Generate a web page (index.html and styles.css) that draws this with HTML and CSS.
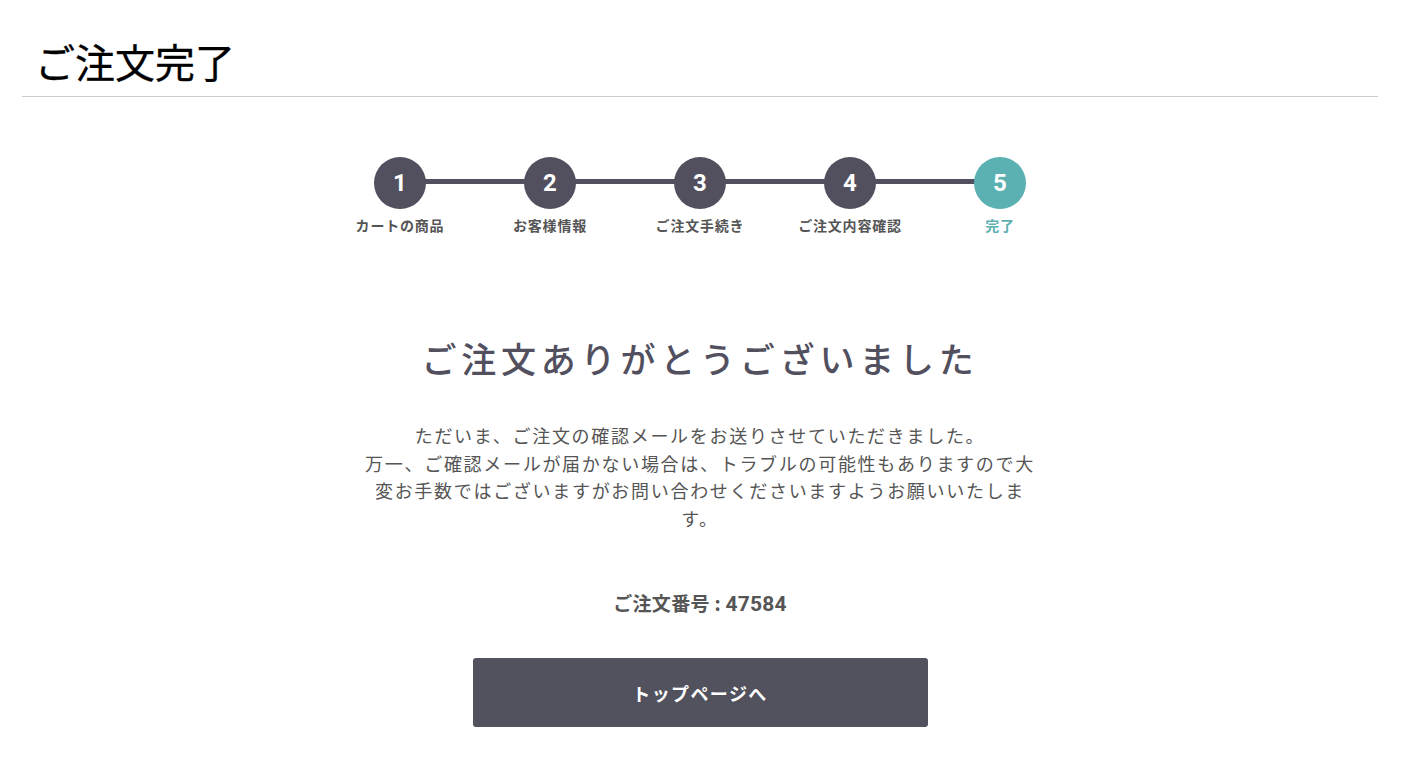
FILE: index.html
```html
<!DOCTYPE html>
<html lang="ja">
<head>
<meta charset="utf-8">
<title>ご注文完了</title>
<link rel="stylesheet" href="styles.css">
</head>
<body>
<div class="page">
  <header class="page-header">
    <h1 class="page-title">ご注文完了</h1>
  </header>

  <ol class="steps">
    <li class="step"><span class="step-num">1</span><span class="step-label">カートの商品</span></li>
    <li class="step"><span class="step-num">2</span><span class="step-label">お客様情報</span></li>
    <li class="step"><span class="step-num">3</span><span class="step-label">ご注文手続き</span></li>
    <li class="step"><span class="step-num">4</span><span class="step-label">ご注文内容確認</span></li>
    <li class="step is-current"><span class="step-num">5</span><span class="step-label">完了</span></li>
  </ol>

  <section class="complete">
    <h2 class="complete-title">ご注文ありがとうございました</h2>
    <p class="complete-text">ただいま、ご注文の確認メールをお送りさせていただきました。<br>万一、ご確認メールが届かない場合は、トラブルの可能性もありますので大変お手数ではございますがお問い合わせくださいますようお願いいたします。</p>
    <p class="order-no">ご注文番号 : <span class="num">47584</span></p>
    <a class="btn-top" href="#">トップページへ</a>
  </section>
</div>
</body>
</html>
```

FILE: styles.css
```css
* { box-sizing: border-box; }

html, body {
  margin: 0;
  padding: 0;
  background: #fff;
}

body {
  font-family: "Noto Sans CJK JP", "Noto Sans", sans-serif;
  color: #555;
}

.page {
  width: 1356px;
  margin: 0 0 0 22px;
}

.page-header {
  padding: 32px 13px 6px;
  border-bottom: 1px solid #cccccc;
}

.page-title {
  margin: 0;
  font-size: 40px;
  line-height: 58px;
  font-weight: 400;
  color: #000;
  -webkit-text-stroke: 0.3px #000;
}

.steps {
  list-style: none;
  margin: 60px auto 0;
  padding: 0;
  display: flex;
  justify-content: center;
}

.step {
  position: relative;
  width: 150px;
  display: flex;
  flex-direction: column;
  align-items: center;
}

.step::after {
  content: "";
  position: absolute;
  top: 22px;
  left: 75px;
  width: 150px;
  height: 5px;
  background: #52505f;
  z-index: 0;
}

.step:last-child::after { display: none; }

.step-num {
  position: relative;
  z-index: 1;
  width: 52px;
  height: 52px;
  border-radius: 50%;
  background: #52505f;
  color: #fff;
  font-family: "Roboto", "Noto Sans CJK JP", sans-serif;
  font-size: 24px;
  font-weight: 700;
  line-height: 52px;
  text-align: center;
}

.step-label {
  margin-top: 6px;
  font-size: 14px;
  line-height: 20px;
  font-weight: 700;
  letter-spacing: 0.8px;
  color: #555;
  white-space: nowrap;
}

.step.is-current .step-num { background: #5bb0b1; }
.step.is-current .step-label { color: #5bb0b1; }

.complete {
  display: flex;
  flex-direction: column;
  align-items: center;
  text-align: center;
}

.complete-title {
  margin: 99px 0 0;
  font-size: 35px;
  line-height: 48px;
  font-weight: 500;
  letter-spacing: 4.8px;
  color: #52505f;
}

.complete-text {
  margin: 40px 0 0;
  width: 686px;
  font-size: 18px;
  line-height: 27.5px;
  letter-spacing: 1.7px;
  color: #555;
}

.order-no {
  margin: 57px 0 0;
  font-size: 19px;
  line-height: 27px;
  font-weight: 700;
  letter-spacing: 0.3px;
  color: #555;
  white-space: pre;
}

.order-no .num {
  font-family: "Roboto", "Noto Sans CJK JP", sans-serif;
  font-size: 21px;
  letter-spacing: 0.2px;
}

.btn-top {
  margin-top: 40px;
  width: 455px;
  height: 69px;
  display: flex;
  align-items: center;
  justify-content: center;
  background: #52525f;
  border-radius: 3px;
  color: #fff;
  font-size: 18px;
  font-weight: 700;
  letter-spacing: 1.4px;
  text-decoration: none;
}
```
